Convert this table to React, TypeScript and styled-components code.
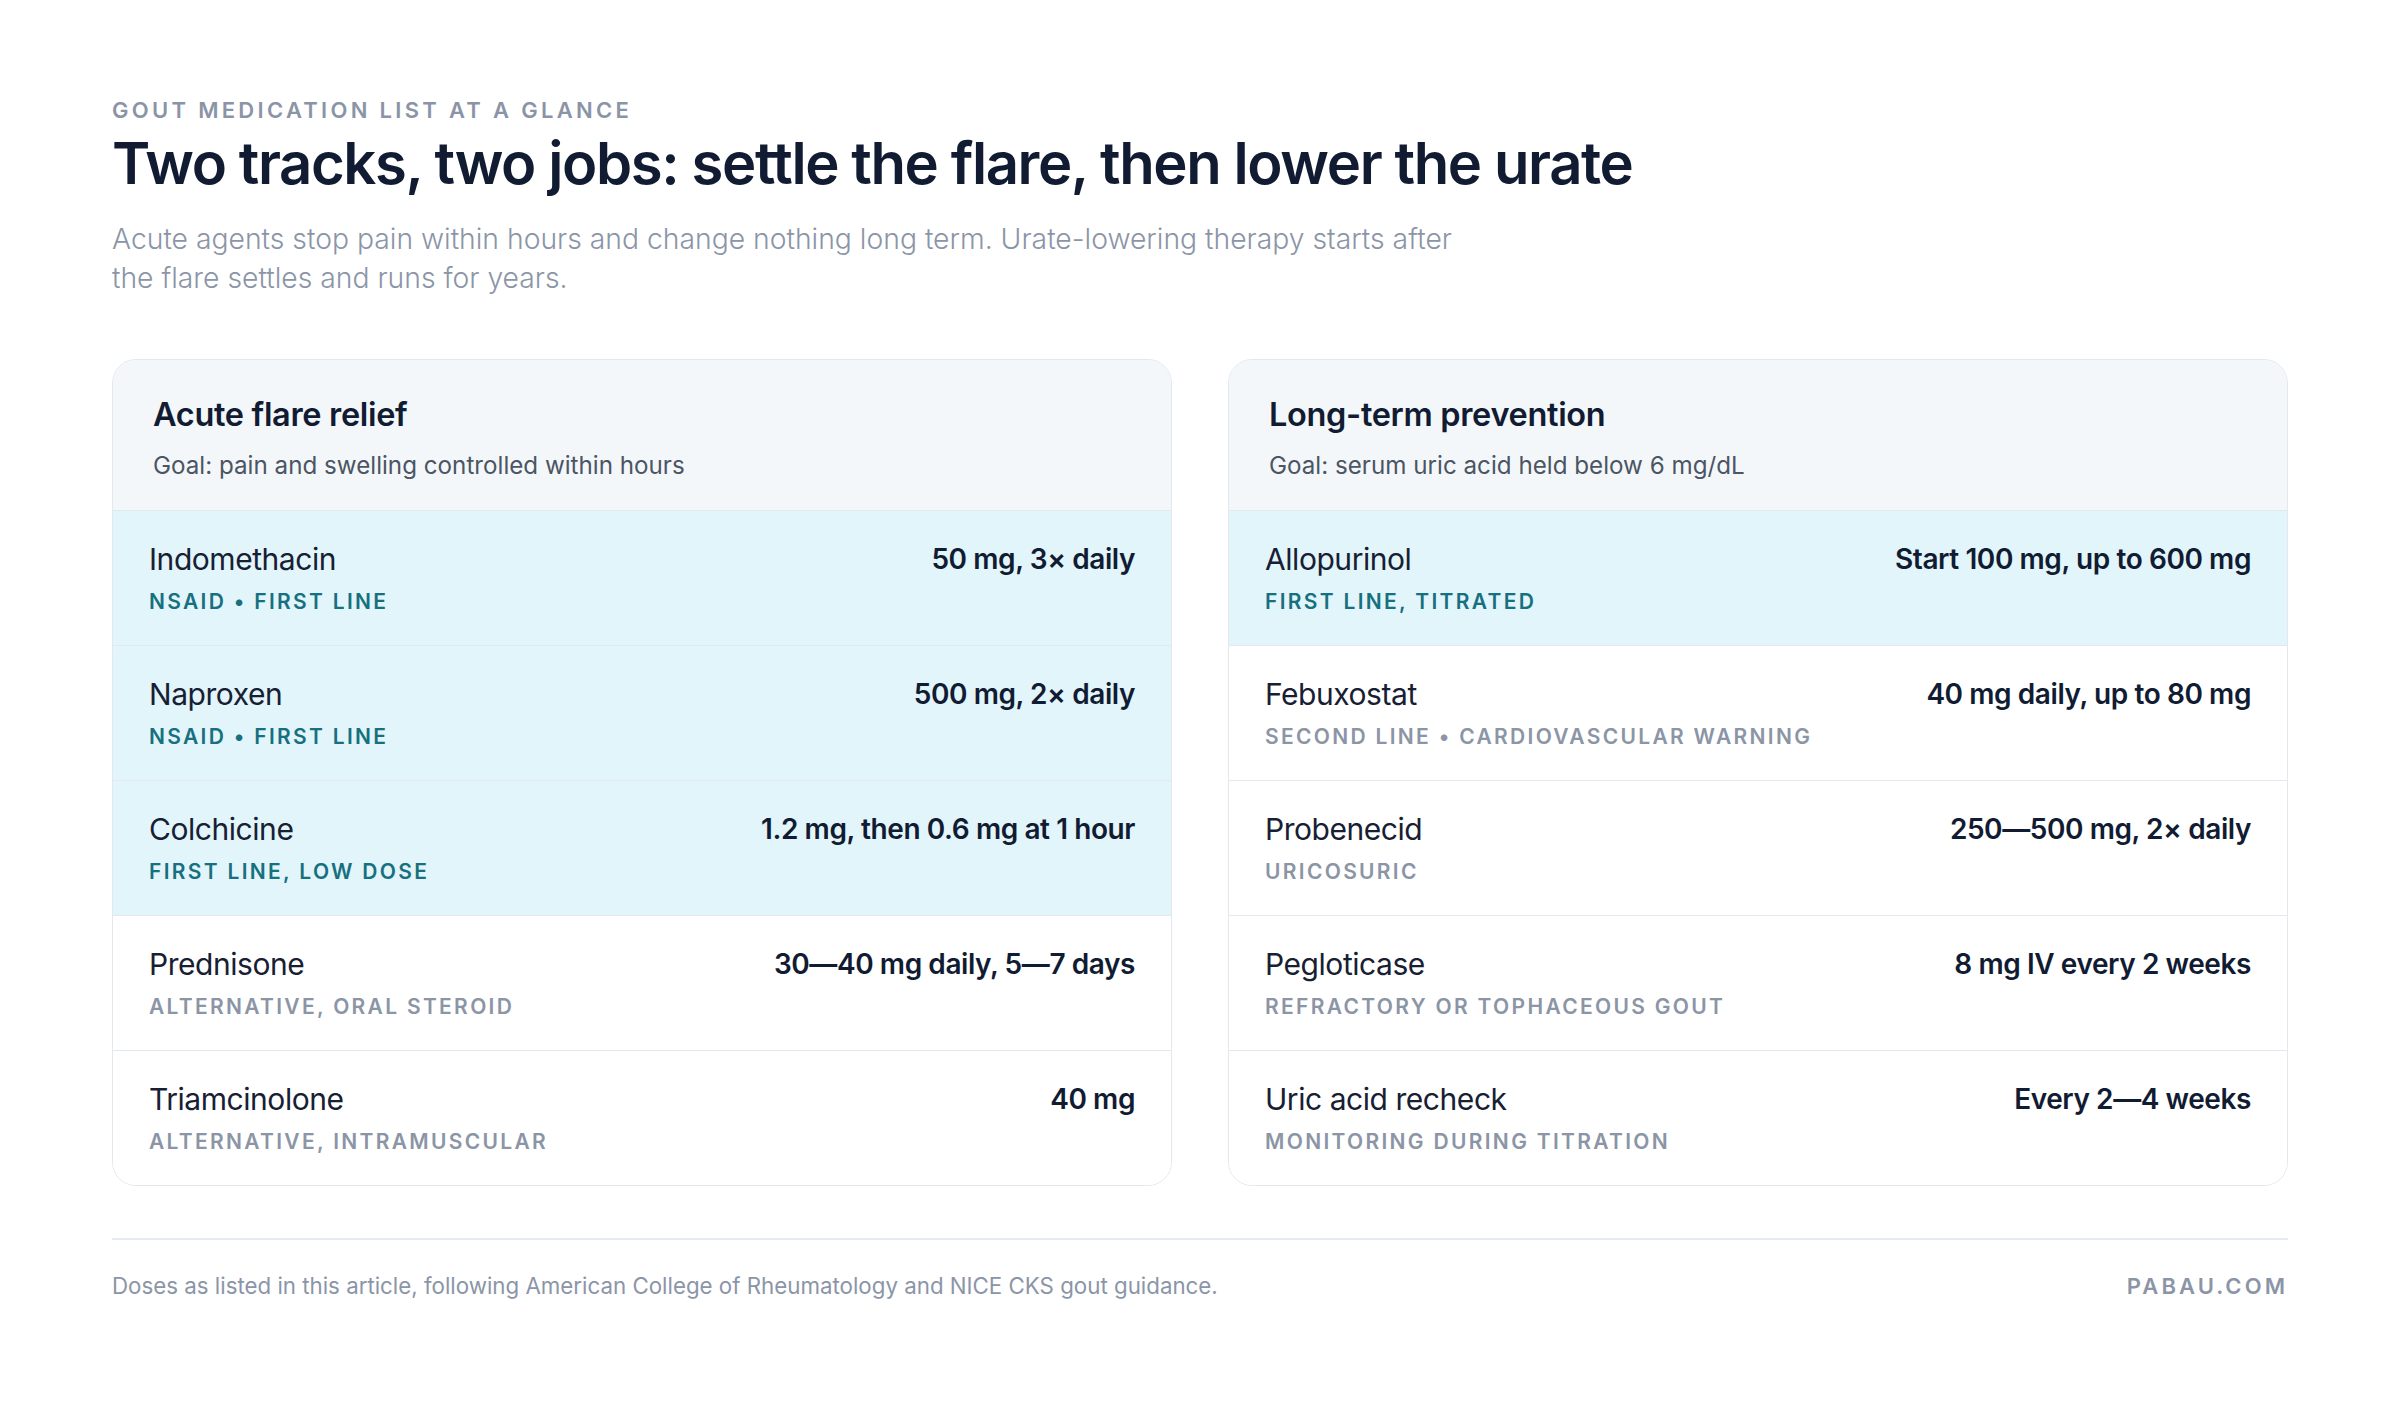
import React from "react";
import styled, { createGlobalStyle } from "styled-components";

const Global = createGlobalStyle`
  html, body { margin: 0; padding: 0; background: #ffffff; }
  body { font-family: Inter, "Noto Sans", sans-serif; color: #111c33; -webkit-font-smoothing: antialiased; }
  * { box-sizing: border-box; }
`;

const Page = styled.main`
  width: 2400px;
  min-height: 1418px;
  padding: 97px 112px 0;
  display: flex;
  flex-direction: column;
`;

const Eyebrow = styled.div`
  font-size: 22px;
  line-height: 26px;
  font-weight: 600;
  letter-spacing: 0.15em;
  color: #8a94a6;
  text-transform: uppercase;
`;

const Title = styled.h1`
  margin: 7px 0 0;
  font-size: 58px;
  line-height: 67px;
  font-weight: 600;
  letter-spacing: -0.024em;
  color: #111c33;
`;

const Lead = styled.p`
  margin: 23px 0 0;
  max-width: 1365px;
  font-size: 28.3px;
  line-height: 39px;
  font-weight: 300;
  color: #8b95a7;
`;

const Columns = styled.section`
  margin-top: 61px;
  display: grid;
  grid-template-columns: 1fr 1fr;
  gap: 56px;
`;

const Card = styled.div`
  border: 1px solid #e3e8ef;
  border-radius: 24px;
  overflow: hidden;
  background: #ffffff;
  display: flex;
  flex-direction: column;
`;

const CardHead = styled.header`
  background: #f4f7fa;
  padding: 35px 40px 29px;
  border-bottom: 1px solid #e3e8ef;
  display: flex;
  flex-direction: column;
  gap: 16px;
`;

const CardTitle = styled.h2`
  margin: 0;
  font-size: 32.5px;
  line-height: 40px;
  font-weight: 600;
  letter-spacing: -0.01em;
  color: #111c33;
`;

const Goal = styled.div`
  font-size: 24.2px;
  line-height: 30px;
  color: #4b5563;
`;

const Row = styled.div<{ $hl: boolean }>`
  display: flex;
  justify-content: space-between;
  align-items: flex-start;
  padding: 30px 36px 31px;
  background: ${(p) => (p.$hl ? "#e2f5fb" : "#ffffff")};
  & + & { border-top: 1px solid #e3e8ef; }
`;

const Info = styled.div`
  display: flex;
  flex-direction: column;
  gap: 13px;
`;

const Name = styled.div`
  font-size: 30px;
  line-height: 36px;
  font-weight: 400;
  color: #172033;
  letter-spacing: -0.015em;
`;

const Tag = styled.div<{ $hl: boolean }>`
  font-size: 21px;
  line-height: 24px;
  font-weight: 600;
  letter-spacing: 0.11em;
  text-transform: uppercase;
  color: ${(p) => (p.$hl ? "#17707f" : "#8b95a5")};
`;

const Dose = styled.div`
  font-size: 28px;
  line-height: 36px;
  font-weight: 600;
  color: #111c33;
  text-align: right;
  letter-spacing: -0.015em;
`;

const Footer = styled.footer`
  margin-top: 52px;
  border-top: 2px solid #e5e9f0;
  padding-top: 33px;
  display: flex;
  justify-content: space-between;
  align-items: center;
`;

const Note = styled.div`
  font-size: 22.3px;
  line-height: 26px;
  color: #8b95a7;
`;

const Brand = styled.div`
  font-size: 22px;
  line-height: 26px;
  font-weight: 600;
  letter-spacing: 0.14em;
  color: #8b95a7;
`;

type Med = { name: string; tag: string; dose: string; hl: boolean };

const acute: Med[] = [
  { name: "Indomethacin", tag: "NSAID • First line", dose: "50 mg, 3× daily", hl: true },
  { name: "Naproxen", tag: "NSAID • First line", dose: "500 mg, 2× daily", hl: true },
  { name: "Colchicine", tag: "First line, low dose", dose: "1.2 mg, then 0.6 mg at 1 hour", hl: true },
  { name: "Prednisone", tag: "Alternative, oral steroid", dose: "30—40 mg daily, 5—7 days", hl: false },
  { name: "Triamcinolone", tag: "Alternative, intramuscular", dose: "40 mg", hl: false },
];

const longTerm: Med[] = [
  { name: "Allopurinol", tag: "First line, titrated", dose: "Start 100 mg, up to 600 mg", hl: true },
  { name: "Febuxostat", tag: "Second line • Cardiovascular warning", dose: "40 mg daily, up to 80 mg", hl: false },
  { name: "Probenecid", tag: "Uricosuric", dose: "250—500 mg, 2× daily", hl: false },
  { name: "Pegloticase", tag: "Refractory or tophaceous gout", dose: "8 mg IV every 2 weeks", hl: false },
  { name: "Uric acid recheck", tag: "Monitoring during titration", dose: "Every 2—4 weeks", hl: false },
];

function MedCard({ title, goal, meds }: { title: string; goal: string; meds: Med[] }) {
  return (
    <Card>
      <CardHead>
        <CardTitle>{title}</CardTitle>
        <Goal>{goal}</Goal>
      </CardHead>
      {meds.map((m) => (
        <Row key={m.name} $hl={m.hl}>
          <Info>
            <Name>{m.name}</Name>
            <Tag $hl={m.hl}>{m.tag}</Tag>
          </Info>
          <Dose>{m.dose}</Dose>
        </Row>
      ))}
    </Card>
  );
}

export default function App() {
  return (
    <>
      <Global />
      <Page>
        <Eyebrow>Gout medication list at a glance</Eyebrow>
        <Title>Two tracks, two jobs: settle the flare, then lower the urate</Title>
        <Lead>
          Acute agents stop pain within hours and change nothing long term. Urate-lowering therapy starts after
          the flare settles and runs for years.
        </Lead>
        <Columns>
          <MedCard title="Acute flare relief" goal="Goal: pain and swelling controlled within hours" meds={acute} />
          <MedCard title="Long-term prevention" goal="Goal: serum uric acid held below 6 mg/dL" meds={longTerm} />
        </Columns>
        <Footer>
          <Note>
            Doses as listed in this article, following American College of Rheumatology and NICE CKS gout guidance.
          </Note>
          <Brand>PABAU.COM</Brand>
        </Footer>
      </Page>
    </>
  );
}
